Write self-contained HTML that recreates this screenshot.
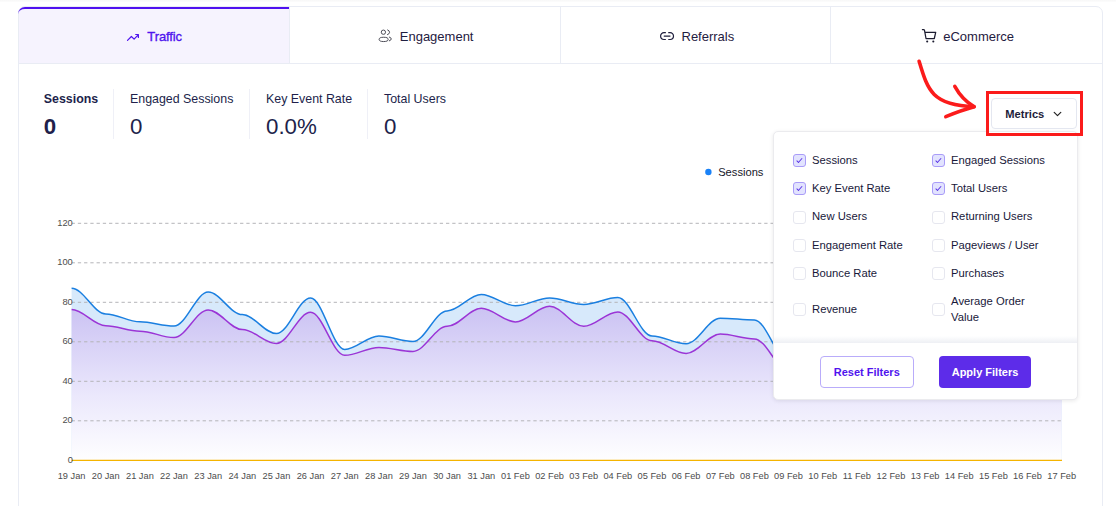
<!DOCTYPE html>
<html lang="en"><head><meta charset="utf-8"><title>Traffic Overview</title>
<style>
*{box-sizing:border-box;margin:0;padding:0}
html,body{width:1116px;height:506px;overflow:hidden;background:#fff}
body{position:relative;font-family:"Liberation Sans",Arial,sans-serif;color:#211f4b}
.abs,.card,.tab,.st,.dv,.cb,.lb,.btn{position:absolute}
.topstrip{position:absolute;left:0;top:0;width:1116px;height:2px;background:linear-gradient(#f7f7f7,#fcfcfc)}
.card{left:18px;top:6px;width:1085px;height:520px;border:1px solid #e9ecf4;border-radius:7px 7px 0 0;background:#fff}
.tabs{position:absolute;left:19px;top:7px;width:1083px;height:57px;border-bottom:1px solid #e9ecf4}
.tab{top:0;height:56px;width:270.75px;border-right:1px solid #e9ecf4;font-size:13px;line-height:56px;color:#1f2041;white-space:nowrap}
.tab.last{border-right:0}
.tab.act{background:#f6f3fe;color:#4f14ee;border-top-left-radius:6px}
.tab.act:before{content:"";position:absolute;left:-1px;top:-0.5px;right:0;height:8px;border-top:2.5px solid #4f10ef;border-top-left-radius:7px}
.tab span{position:absolute;top:1.6px}
.tab svg{position:absolute;overflow:visible}
.st{white-space:nowrap}
.st .l{position:absolute;font-size:12.4px;line-height:16px;top:0.5px;left:0}
.st .v{position:absolute;font-size:22.3px;line-height:26px;top:24.3px;left:0}
.dv{width:1px;top:89px;height:50px;background:#eff0f7}
.cb{width:12.8px;height:12.8px;border:1px solid #e6e7ef;border-radius:3px;background:#fff}
.cb.on{border-color:#a99cf8;background:#e2e3fe}
.cb.on:after{content:"";position:absolute;left:3.9px;top:2.1px;width:2.4px;height:4.6px;border:solid #5b34e6;border-width:0 1.1px 1.1px 0;transform:rotate(42deg)}
.lb{font-size:11.25px;line-height:16px;color:#18183a;white-space:nowrap}
.btn{top:356px;height:32px;border-radius:4px;font-size:11px;font-weight:bold;line-height:30px;text-align:center}
svg text{font-family:"Liberation Sans",Arial,sans-serif}
</style></head><body>
<div class="topstrip"></div>
<div class="card"></div>
<div class="tabs">
 <div class="tab act" style="left:0"><svg style="left:108px;top:26px" width="13" height="9" viewBox="0 0 13 9"><path d="M0.5 7.4 L4.4 3.5 L7.1 6.1 L11.2 1.8 M8.7 1.5 H11.4 V4.4" fill="none" stroke="#4f14ee" stroke-width="1.2" stroke-linecap="round" stroke-linejoin="round"/></svg><span style="left:128.3px;-webkit-text-stroke:0.35px #4f14ee;letter-spacing:-0.1px">Traffic</span></div>
 <div class="tab" style="left:270.75px"><svg style="left:88px;top:22px" width="15" height="14" viewBox="0 0 15 14"><g fill="none" stroke="#45454f" stroke-width="0.95"><circle cx="5.4" cy="3.2" r="2.15"/><ellipse cx="5.65" cy="10.4" rx="4.55" ry="2.15"/><path d="M9.65 0.9 Q11.6 1.6 11.55 3.3 Q11.5 5 9.45 5.7 M11.35 8.05 Q13.3 8.6 13.25 9.95 Q13.2 11.3 11.35 11.85" stroke-linecap="round"/></g></svg><span style="left:110px">Engagement</span></div>
 <div class="tab" style="left:541.5px"><svg style="left:99px;top:25px" width="15" height="9" viewBox="0 0 15 9"><path d="M5.4 0.7 H4 A3.4 3.4 0 0 0 4 7.5 H5.4 M8.7 0.7 H10.1 A3.4 3.4 0 0 1 10.1 7.5 H8.7 M4.2 4.1 H10" fill="none" stroke="#1f1f3d" stroke-width="1.2" stroke-linecap="round"/></svg><span style="left:121px">Referrals</span></div>
 <div class="tab last" style="left:812.25px"><svg style="left:90.5px;top:22px" width="15" height="14" viewBox="0 0 15 14"><path d="M0.4 0.5 H1.6 Q2.3 0.5 2.5 1.4 L4 9.5 H12.3 L13.7 3.3 H2.9" fill="none" stroke="#1c1c30" stroke-width="1.25" stroke-linecap="round" stroke-linejoin="round"/><circle cx="5.2" cy="12.5" r="1.05" fill="#1c1c30"/><circle cx="11.3" cy="12.5" r="1.05" fill="#1c1c30"/></svg><span style="left:112px">eCommerce</span></div>
</div>

<div class="st" style="left:43.8px;top:90px;font-weight:bold"><span class="l">Sessions</span><span class="v">0</span></div>
<div class="dv" style="left:113px"></div>
<div class="st" style="left:130px;top:90px"><span class="l">Engaged Sessions</span><span class="v">0</span></div>
<div class="dv" style="left:249px"></div>
<div class="st" style="left:266px;top:90px"><span class="l">Key Event Rate</span><span class="v">0.0%</span></div>
<div class="dv" style="left:367px"></div>
<div class="st" style="left:384px;top:90px"><span class="l">Total Users</span><span class="v">0</span></div>

<svg class="abs" style="left:0;top:0" width="1116" height="506" viewBox="0 0 1116 506">
 <defs>
  <linearGradient id="gb" x1="0" y1="0" x2="0" y2="1"><stop offset="0" stop-color="#d3e6fb"/><stop offset="1" stop-color="#f4f8fe"/></linearGradient>
  <linearGradient id="gp" gradientUnits="userSpaceOnUse" x1="0" y1="300" x2="0" y2="460"><stop offset="0" stop-color="#c8bff2"/><stop offset="0.6" stop-color="#ebe8fc"/><stop offset="1" stop-color="#fefeff"/></linearGradient>
 </defs>
 <path d="M71.6 288.2C83.5 288.2 93.8 313.9 105.7 313.9C117.7 313.9 127.9 321.8 139.9 321.8C151.8 321.8 162.1 326.1 174.0 326.1C186.0 326.1 196.2 292.1 208.2 292.1C220.1 292.1 230.4 314.6 242.3 314.6C254.2 314.6 264.5 333.6 276.4 333.6C288.4 333.6 298.6 298.0 310.6 298.0C322.5 298.0 332.8 349.4 344.7 349.4C356.7 349.4 366.9 336.0 378.9 336.0C390.8 336.0 401.1 341.5 413.0 341.5C424.9 341.5 435.2 310.9 447.1 310.9C459.1 310.9 469.3 294.5 481.3 294.5C493.2 294.5 503.5 305.8 515.4 305.8C527.4 305.8 537.6 298.0 549.6 298.0C561.5 298.0 571.8 304.4 583.7 304.4C595.6 304.4 605.9 297.5 617.8 297.5C629.8 297.5 640.0 336.0 652.0 336.0C663.9 336.0 674.2 343.7 686.1 343.7C698.1 343.7 708.3 318.2 720.3 318.2C732.2 318.2 742.5 320.0 754.4 320.0C766.3 320.0 776.6 360.7 788.5 360.7C800.5 360.7 810.7 353.4 822.7 353.4C834.6 353.4 844.9 341.5 856.8 341.5C868.8 341.5 879.0 351.4 891.0 351.4C902.9 351.4 913.2 361.2 925.1 361.2C937.0 361.2 947.3 345.4 959.2 345.4C971.2 345.4 981.4 335.6 993.4 335.6C1005.3 335.6 1015.6 347.4 1027.5 347.4C1039.5 347.4 1049.7 329.6 1061.7 329.6L1061.7 460.0L71.6 460.0Z" fill="#d4e7fb" fill-opacity="0.92"/>
 <path d="M71.6 309.5C83.5 309.5 93.8 325.7 105.7 325.7C117.7 325.7 127.9 331.2 139.9 331.2C151.8 331.2 162.1 337.6 174.0 337.6C186.0 337.6 196.2 309.9 208.2 309.9C220.1 309.9 230.4 329.6 242.3 329.6C254.2 329.6 264.5 343.5 276.4 343.5C288.4 343.5 298.6 312.3 310.6 312.3C322.5 312.3 332.8 355.3 344.7 355.3C356.7 355.3 366.9 347.4 378.9 347.4C390.8 347.4 401.1 351.4 413.0 351.4C424.9 351.4 435.2 326.3 447.1 326.3C459.1 326.3 469.3 308.3 481.3 308.3C493.2 308.3 503.5 321.9 515.4 321.9C527.4 321.9 537.6 306.3 549.6 306.3C561.5 306.3 571.8 326.3 583.7 326.3C595.6 326.3 605.9 311.9 617.8 311.9C629.8 311.9 640.0 340.7 652.0 340.7C663.9 340.7 674.2 353.4 686.1 353.4C698.1 353.4 708.3 334.0 720.3 334.0C732.2 334.0 742.5 338.9 754.4 338.9C766.3 338.9 776.6 370.5 788.5 370.5C800.5 370.5 810.7 365.2 822.7 365.2C834.6 365.2 844.9 355.3 856.8 355.3C868.8 355.3 879.0 365.2 891.0 365.2C902.9 365.2 913.2 373.1 925.1 373.1C937.0 373.1 947.3 361.2 959.2 361.2C971.2 361.2 981.4 351.4 993.4 351.4C1005.3 351.4 1015.6 361.2 1027.5 361.2C1039.5 361.2 1049.7 345.4 1061.7 345.4L1061.7 460.0L71.6 460.0Z" fill="url(#gp)"/>
 <g stroke="#b4b4b8" stroke-width="1" stroke-dasharray="3.3 2.94"><line x1="71.6" x2="1062" y1="420.8" y2="420.8"/><line x1="71.6" x2="1062" y1="381.3" y2="381.3"/><line x1="71.6" x2="1062" y1="341.8" y2="341.8"/><line x1="71.6" x2="1062" y1="302.3" y2="302.3"/><line x1="71.6" x2="1062" y1="262.8" y2="262.8"/><line x1="71.6" x2="1062" y1="223.3" y2="223.3"/></g>
 <path d="M71.6 288.2C83.5 288.2 93.8 313.9 105.7 313.9C117.7 313.9 127.9 321.8 139.9 321.8C151.8 321.8 162.1 326.1 174.0 326.1C186.0 326.1 196.2 292.1 208.2 292.1C220.1 292.1 230.4 314.6 242.3 314.6C254.2 314.6 264.5 333.6 276.4 333.6C288.4 333.6 298.6 298.0 310.6 298.0C322.5 298.0 332.8 349.4 344.7 349.4C356.7 349.4 366.9 336.0 378.9 336.0C390.8 336.0 401.1 341.5 413.0 341.5C424.9 341.5 435.2 310.9 447.1 310.9C459.1 310.9 469.3 294.5 481.3 294.5C493.2 294.5 503.5 305.8 515.4 305.8C527.4 305.8 537.6 298.0 549.6 298.0C561.5 298.0 571.8 304.4 583.7 304.4C595.6 304.4 605.9 297.5 617.8 297.5C629.8 297.5 640.0 336.0 652.0 336.0C663.9 336.0 674.2 343.7 686.1 343.7C698.1 343.7 708.3 318.2 720.3 318.2C732.2 318.2 742.5 320.0 754.4 320.0C766.3 320.0 776.6 360.7 788.5 360.7C800.5 360.7 810.7 353.4 822.7 353.4C834.6 353.4 844.9 341.5 856.8 341.5C868.8 341.5 879.0 351.4 891.0 351.4C902.9 351.4 913.2 361.2 925.1 361.2C937.0 361.2 947.3 345.4 959.2 345.4C971.2 345.4 981.4 335.6 993.4 335.6C1005.3 335.6 1015.6 347.4 1027.5 347.4C1039.5 347.4 1049.7 329.6 1061.7 329.6" fill="none" stroke="#1a7fe0" stroke-width="1.5"/>
 <path d="M71.6 309.5C83.5 309.5 93.8 325.7 105.7 325.7C117.7 325.7 127.9 331.2 139.9 331.2C151.8 331.2 162.1 337.6 174.0 337.6C186.0 337.6 196.2 309.9 208.2 309.9C220.1 309.9 230.4 329.6 242.3 329.6C254.2 329.6 264.5 343.5 276.4 343.5C288.4 343.5 298.6 312.3 310.6 312.3C322.5 312.3 332.8 355.3 344.7 355.3C356.7 355.3 366.9 347.4 378.9 347.4C390.8 347.4 401.1 351.4 413.0 351.4C424.9 351.4 435.2 326.3 447.1 326.3C459.1 326.3 469.3 308.3 481.3 308.3C493.2 308.3 503.5 321.9 515.4 321.9C527.4 321.9 537.6 306.3 549.6 306.3C561.5 306.3 571.8 326.3 583.7 326.3C595.6 326.3 605.9 311.9 617.8 311.9C629.8 311.9 640.0 340.7 652.0 340.7C663.9 340.7 674.2 353.4 686.1 353.4C698.1 353.4 708.3 334.0 720.3 334.0C732.2 334.0 742.5 338.9 754.4 338.9C766.3 338.9 776.6 370.5 788.5 370.5C800.5 370.5 810.7 365.2 822.7 365.2C834.6 365.2 844.9 355.3 856.8 355.3C868.8 355.3 879.0 365.2 891.0 365.2C902.9 365.2 913.2 373.1 925.1 373.1C937.0 373.1 947.3 361.2 959.2 361.2C971.2 361.2 981.4 351.4 993.4 351.4C1005.3 351.4 1015.6 361.2 1027.5 361.2C1039.5 361.2 1049.7 345.4 1061.7 345.4" fill="none" stroke="#9b35d6" stroke-width="1.5"/>
 <line x1="71.6" x2="1062" y1="460.4" y2="460.4" stroke="#f5b400" stroke-width="1.2"/>
 <g font-size="9.3" fill="#4d4d4d" text-anchor="end"><text x="72.8" y="462.9">0</text><text x="72.8" y="423.4">20</text><text x="72.8" y="383.9">40</text><text x="72.8" y="344.4">60</text><text x="72.8" y="304.9">80</text><text x="72.8" y="265.4">100</text><text x="72.8" y="225.9">120</text></g>
 <g font-size="9.25" fill="#4d4d4d" text-anchor="middle"><text x="71.6" y="479.3">19 Jan</text><text x="105.7" y="479.3">20 Jan</text><text x="139.9" y="479.3">21 Jan</text><text x="174.0" y="479.3">22 Jan</text><text x="208.2" y="479.3">23 Jan</text><text x="242.3" y="479.3">24 Jan</text><text x="276.4" y="479.3">25 Jan</text><text x="310.6" y="479.3">26 Jan</text><text x="344.7" y="479.3">27 Jan</text><text x="378.9" y="479.3">28 Jan</text><text x="413.0" y="479.3">29 Jan</text><text x="447.1" y="479.3">30 Jan</text><text x="481.3" y="479.3">31 Jan</text><text x="515.4" y="479.3">01 Feb</text><text x="549.6" y="479.3">02 Feb</text><text x="583.7" y="479.3">03 Feb</text><text x="617.8" y="479.3">04 Feb</text><text x="652.0" y="479.3">05 Feb</text><text x="686.1" y="479.3">06 Feb</text><text x="720.3" y="479.3">07 Feb</text><text x="754.4" y="479.3">08 Feb</text><text x="788.5" y="479.3">09 Feb</text><text x="822.7" y="479.3">10 Feb</text><text x="856.8" y="479.3">11 Feb</text><text x="891.0" y="479.3">12 Feb</text><text x="925.1" y="479.3">13 Feb</text><text x="959.2" y="479.3">14 Feb</text><text x="993.4" y="479.3">15 Feb</text><text x="1027.5" y="479.3">16 Feb</text><text x="1061.7" y="479.3">17 Feb</text></g>
 <circle cx="708.4" cy="172" r="3.2" fill="#1a82f7"/>
 <text x="718.2" y="176.4" font-size="11.15" fill="#16162a">Sessions</text>
 <g fill="none" stroke="#fb1b1b" stroke-width="3.6" stroke-linecap="round" stroke-linejoin="round">
  <path d="M919.1 61.3 C927.8 90.2 931.9 105.1 974 106.6"/>
  <path d="M954.8 86.4 C959.5 95 966 102 974.2 106.8 C965 109.3 956 112.5 945.8 116.7"/>
 </g>
</svg>

<div class="abs" style="left:772.8px;top:131px;width:305px;height:269px;background:#fff;border:1px solid #ebebee;border-radius:5px;box-shadow:0 1px 4px rgba(0,0,0,0.09)"></div>
<div class="abs" style="left:773.8px;top:336px;width:303px;height:7px;background:linear-gradient(rgba(240,242,246,0),rgba(236,238,243,0.9))"></div>
<span class="cb on" style="left:793px;top:154.0px"></span><span class="lb" style="left:812px;top:152.0px">Sessions</span>
<span class="cb on" style="left:932px;top:154.0px"></span><span class="lb" style="left:951px;top:152.0px">Engaged Sessions</span>
<span class="cb on" style="left:793px;top:182.4px"></span><span class="lb" style="left:812px;top:180.4px">Key Event Rate</span>
<span class="cb on" style="left:932px;top:182.4px"></span><span class="lb" style="left:951px;top:180.4px">Total Users</span>
<span class="cb" style="left:793px;top:210.8px"></span><span class="lb" style="left:812px;top:208.2px">New Users</span>
<span class="cb" style="left:932px;top:210.8px"></span><span class="lb" style="left:951px;top:208.2px">Returning Users</span>
<span class="cb" style="left:793px;top:238.8px"></span><span class="lb" style="left:812px;top:236.8px">Engagement Rate</span>
<span class="cb" style="left:932px;top:238.8px"></span><span class="lb" style="left:951px;top:236.8px">Pageviews / User</span>
<span class="cb" style="left:793px;top:267.1px"></span><span class="lb" style="left:812px;top:265.1px">Bounce Rate</span>
<span class="cb" style="left:932px;top:267.1px"></span><span class="lb" style="left:951px;top:265.1px">Purchases</span>
<span class="cb" style="left:793px;top:303.2px"></span><span class="lb" style="left:812.1px;top:301.4px">Revenue</span>
<span class="cb" style="left:932px;top:303.2px"></span><span class="lb" style="left:951.1px;top:293.4px;width:90px;white-space:normal">Average Order Value</span>

<div class="btn" style="left:820px;width:93.5px;border:1px solid #b9acfa;color:#4f14ee;background:#fff">Reset Filters</div>
<div class="btn" style="left:939px;width:92px;background:#5d2ce9;color:#fff;line-height:32px">Apply Filters</div>

<div class="abs" style="left:991.3px;top:98px;width:85.4px;height:31px;border:1px solid #e4e7f0;border-radius:4px;background:#fff"></div>
<div class="abs" style="left:1005.3px;top:106px;font-size:11.15px;line-height:16px;color:#1d1d3a;font-weight:bold">Metrics</div>
<svg class="abs" style="left:1053px;top:111px" width="9" height="7" viewBox="0 0 9 7"><path d="M1.2 1.4 L4.5 4.7 L7.8 1.4" fill="none" stroke="#222" stroke-width="1.2" stroke-linecap="round" stroke-linejoin="round"/></svg>
<div class="abs" style="left:985.6px;top:90.9px;width:97.8px;height:45.5px;border:3px solid #fb1b1b"></div>
</body></html>
